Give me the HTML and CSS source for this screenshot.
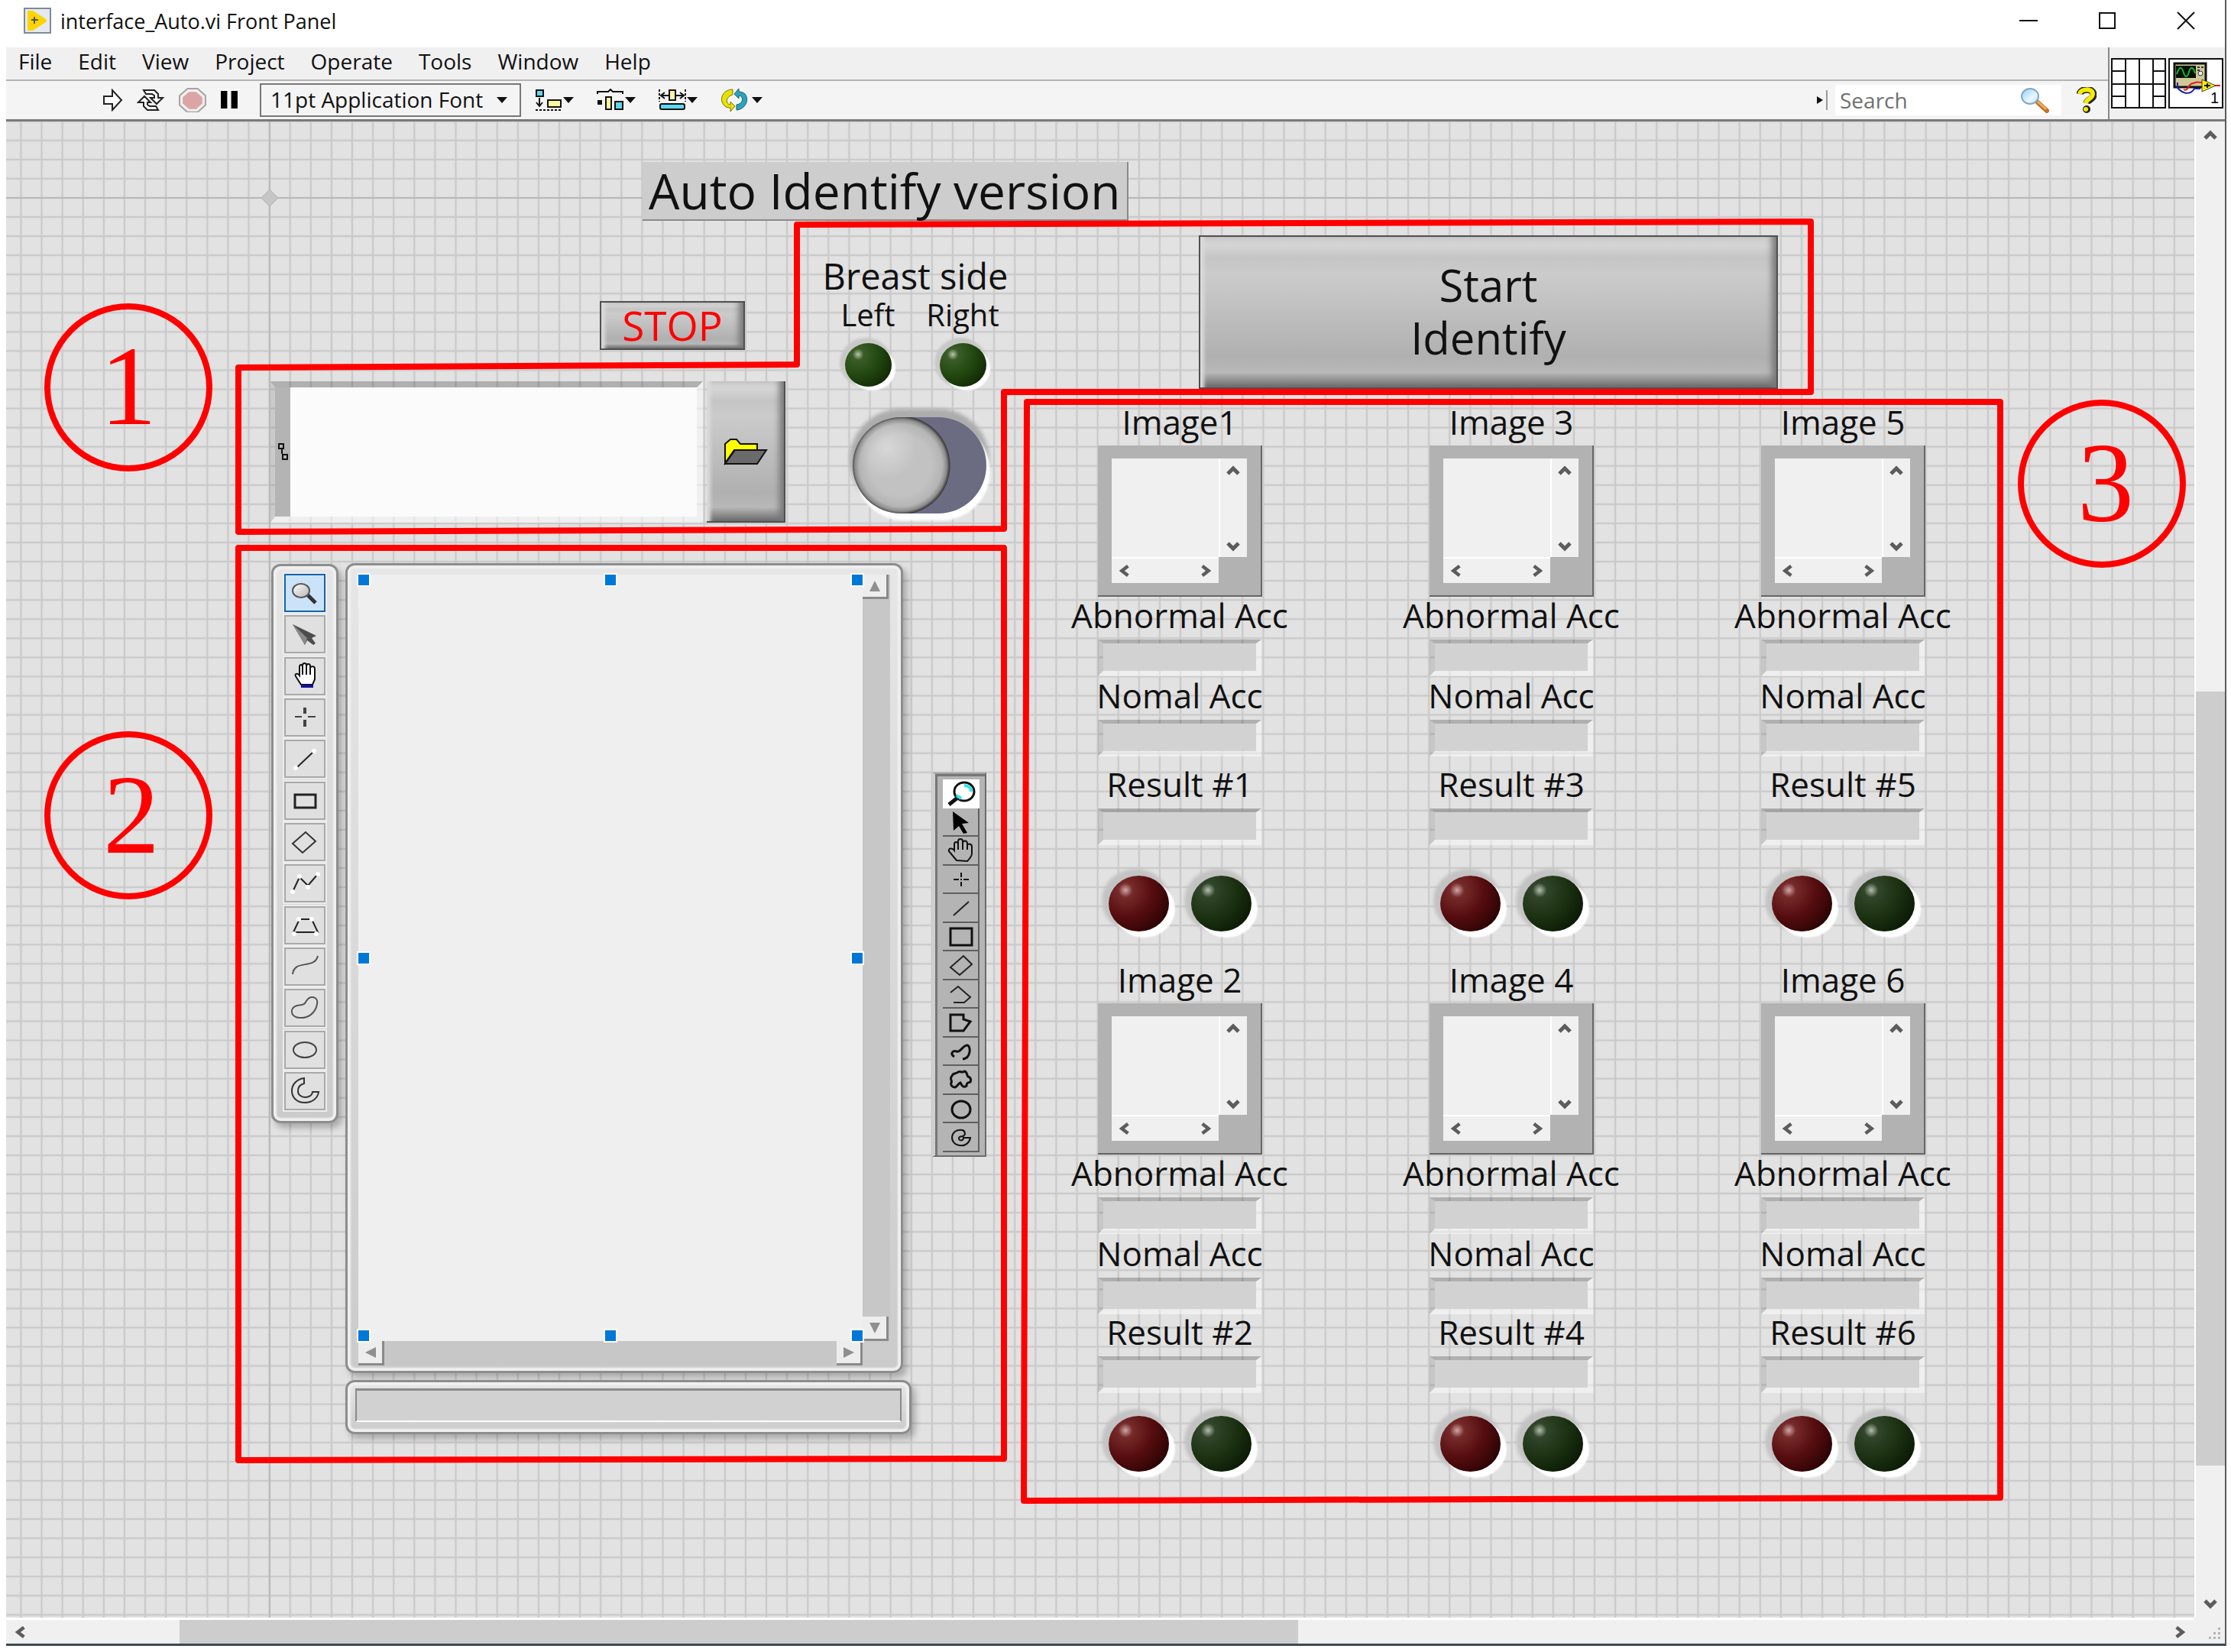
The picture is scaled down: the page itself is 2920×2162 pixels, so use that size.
FILE: index.html
```html
<!DOCTYPE html>
<html lang="en">
<head>
<meta charset="utf-8">
<meta name="viewport" content="width=device-width, initial-scale=1">
<title>interface_Auto.vi Front Panel</title>
<link rel="stylesheet" href="styles.css">
</head>
<body>
<svg class="defs" aria-hidden="true">
  <defs>
    <linearGradient id="lens" x1="0" y1="0" x2="1" y2="1"><stop offset="0" stop-color="#ffffff"/><stop offset="1" stop-color="#b4b4b4"/></linearGradient>
    <linearGradient id="blueLens" x1="0" y1="0" x2="1" y2="1"><stop offset="0" stop-color="#8fd0f5"/><stop offset="0.6" stop-color="#e8f7ff"/><stop offset="1" stop-color="#b9dcf7"/></linearGradient>
    <symbol id="caret" viewBox="0 0 16 10"><path d="M1 1h14L8 9z" fill="#111"/></symbol>
    <symbol id="chev-up" viewBox="0 0 18 14"><path d="M2 11L9 4l7 7" fill="none" stroke="#5c5c5c" stroke-width="5"/></symbol>
    <symbol id="chev-down" viewBox="0 0 18 14"><path d="M2 3l7 7 7-7" fill="none" stroke="#5c5c5c" stroke-width="5"/></symbol>
    <symbol id="chev-left" viewBox="0 0 16 18"><path d="M14 2L5 9l9 7" fill="none" stroke="#5c5c5c" stroke-width="5"/></symbol>
    <symbol id="chev-right" viewBox="0 0 16 18"><path d="M2 2l9 7-9 7" fill="none" stroke="#5c5c5c" stroke-width="5"/></symbol>
  </defs>
</svg>

<div class="window">
  <header class="titlebar">
    <svg class="app-icon" viewBox="0 0 36 34"><rect x="1" y="1" width="34" height="32" fill="#e4eaf0" stroke="#7d8b99" stroke-width="2"/><path d="M5 4h6q2 0 4 2l14 9q2 2 0 4l-14 9q-2 2-4 2H5z" fill="#ffd400"/><path d="M10 16h9M14 12v9" stroke="#555" stroke-width="2"/></svg>
    <h1 class="titlebar__text">interface_Auto.vi Front Panel</h1>
    <div class="titlebar__buttons">
      <button class="sysbtn" aria-label="Minimize"><svg viewBox="0 0 24 24"><path d="M0 12h24" stroke="#111" stroke-width="2"/></svg></button>
      <button class="sysbtn" aria-label="Maximize"><svg viewBox="0 0 24 24"><rect x="2" y="2" width="20" height="20" fill="none" stroke="#111" stroke-width="2"/></svg></button>
      <button class="sysbtn" aria-label="Close"><svg viewBox="0 0 24 24"><path d="M1 1l22 22M23 1L1 23" stroke="#111" stroke-width="2"/></svg></button>
    </div>
  </header>

  <div class="chrome">
    <div class="chrome__bars">
      <nav class="menubar">
        <a href="#">File</a><a href="#">Edit</a><a href="#">View</a><a href="#">Project</a><a href="#">Operate</a><a href="#">Tools</a><a href="#">Window</a><a href="#">Help</a>
      </nav>
      <div class="toolbar">
        <button class="tb tb--run" aria-label="Run"><svg viewBox="0 0 27 30"><path d="M2 10h11V2l12 13-12 13v-8H2z" fill="#fff" stroke="#222" stroke-width="2"/></svg></button>
        <button class="tb tb--cont" aria-label="Run Continuously"><svg viewBox="0 0 37 30"><path d="M9 2h14l5 5v5h6l-8 8-8-8h5V9l-3-2h-8z" fill="#fff" stroke="#222" stroke-width="2"/><path d="M28 28H14l-5-5v-5H2l8-8 8 8h-4v3l3 2h8z" fill="#fff" stroke="#222" stroke-width="2"/></svg></button>
        <button class="tb tb--abort" aria-label="Abort"><svg viewBox="0 0 35 32"><path d="M11 1h13l10 9v12l-10 9H11L1 22V10z" fill="#f3efef" stroke="#a9a4a4" stroke-width="2"/><path d="M13 5h9l8 7v8l-8 7h-9l-8-7v-8z" fill="#dba5a5"/></svg></button>
        <button class="tb tb--pause" aria-label="Pause"><svg viewBox="0 0 23 24"><path d="M1 1h8v22H1zM14 1h8v22h-8z" fill="#000"/></svg></button>
        <div class="fontpick">
          <select aria-label="Font"><option>11pt Application Font</option></select>
          <svg class="fontpick__caret"><use href="#caret"/></svg>
        </div>
        <button class="tb tb--menu" aria-label="Align Objects"><svg class="tb__pic" viewBox="0 0 36 30"><rect x="2" y="2" width="9" height="8" fill="#5fd8ee" stroke="#111" stroke-width="2"/><path d="M6 12v10M2 18l4 5 4-5" stroke="#111" stroke-width="2" fill="none"/><path d="M1 28h34" stroke="#111" stroke-width="2" stroke-dasharray="3 2"/><rect x="17" y="15" width="17" height="9" fill="#fdf7a0" stroke="#111" stroke-width="2"/></svg><svg class="tb__caret"><use href="#caret"/></svg></button>
        <button class="tb tb--menu" aria-label="Distribute Objects"><svg class="tb__pic" viewBox="0 0 36 30"><path d="M1 7V4h14l3-3 3 3h13v3" fill="none" stroke="#111" stroke-width="2"/><rect x="1" y="15" width="6" height="6" fill="#111"/><rect x="12" y="11" width="7" height="16" fill="#fdf7a0" stroke="#111" stroke-width="2"/><rect x="24" y="17" width="10" height="10" fill="#5fd8ee" stroke="#111" stroke-width="2"/></svg><svg class="tb__caret"><use href="#caret"/></svg></button>
        <button class="tb tb--menu" aria-label="Resize Objects"><svg class="tb__pic" viewBox="0 0 36 30"><path d="M1 1v16M35 1v16" stroke="#111" stroke-width="2" stroke-dasharray="3 2"/><path d="M3 9h11M8 5L3 9l5 4M33 9H22M28 5l5 4-5 4" fill="none" stroke="#111" stroke-width="2"/><rect x="14" y="2" width="8" height="13" fill="#fdf7a0" stroke="#111" stroke-width="2"/><rect x="2" y="20" width="32" height="7" rx="2" fill="#5fd8ee" stroke="#111" stroke-width="2"/></svg><svg class="tb__caret"><use href="#caret"/></svg></button>
        <button class="tb tb--menu tb--reorder" aria-label="Reorder"><svg class="tb__pic" viewBox="0 0 36 30"><path d="M16 1C3 1-2 14 4 21c2 3 5 4 9 4v5l6-7-6-6v4C6 20 7 10 16 8z" fill="#e8e000" stroke="#777500"/><path d="M21 28c12-1 17-14 11-21-2-2-5-3-8-3V0l-6 7 6 6V9c7 1 6 11-3 12z" fill="#2ba3bd" stroke="#0d5f70"/></svg><svg class="tb__caret"><use href="#caret"/></svg></button>
        <div class="toolbar__search">
          <svg class="search__grip" viewBox="0 0 16 26"><path d="M1 8v10l8-5z" fill="#111"/><path d="M14 0v26" stroke="#999" stroke-width="2"/></svg>
          <div class="search">
            <input type="search" placeholder="Search" aria-label="Search">
            <svg class="search__icon" viewBox="0 0 38 34"><path d="M23 20l12 11" stroke="#c27024" stroke-width="6" stroke-linecap="round"/><path d="M23 19l11 10" stroke="#f2ac5b" stroke-width="3"/><ellipse cx="13" cy="12" rx="11" ry="10" fill="url(#blueLens)" stroke="#86a6c4" stroke-width="2"/></svg>
          </div>
          <button class="tb tb--help" aria-label="Context Help"><svg viewBox="0 0 26 34"><path d="M4 9C5 2 21 1 22 9c1 7-8 7-9 12" fill="none" stroke="#222" stroke-width="9"/><circle cx="13" cy="29" r="5" fill="#222"/><path d="M4 9C5 2 21 1 21 9c0 6-8 6-9 12" fill="none" stroke="#f5ec00" stroke-width="6"/><circle cx="12" cy="29" r="3" fill="#f5ec00"/></svg></button>
        </div>
      </div>
    </div>
    <div class="chrome__icons">
      <svg class="vi-icon" viewBox="0 0 72 66" aria-label="Connector pane"><rect x="1" y="1" width="70" height="64" fill="#fff" stroke="#111" stroke-width="2"/><path d="M19 1v64M37 1v64M55 1v64M1 34h70M1 17h18M1 50h18M55 17h16M55 50h16" stroke="#111" stroke-width="2"/></svg>
      <svg class="vi-icon" viewBox="0 0 72 66" aria-label="VI icon"><rect x="1" y="1" width="70" height="64" fill="#fff" stroke="#111" stroke-width="2"/><rect x="8" y="7" width="41" height="31" fill="#cfc99a" stroke="#111" stroke-width="3"/><rect x="10" y="10" width="26" height="16" fill="#061006"/><path d="M11 21c4-12 7-9 9-2s5 7 7-1 6-6 8 2" fill="none" stroke="#19b52c" stroke-width="2"/><path d="M38 12h3M43 12h3M38 16h3" stroke="#333" stroke-width="2"/><circle cx="42" cy="20" r="3" fill="#eee" stroke="#333"/><path d="M12 32v7c9 10 18 8 22 1h8" fill="none" stroke="#1a22a8" stroke-width="2"/><path d="M20 41c6 4 6-9 13-8 4-3 6-1 11-1" fill="none" stroke="#e11" stroke-width="2"/><path d="M60 36h8" stroke="#e11" stroke-width="2"/><path d="M44 28v16l18-8z" fill="#f5ec00" stroke="#444" stroke-width="1"/><path d="M47 36h8M51 33v6" stroke="#111" stroke-width="2"/><text x="55" y="59" class="vi-icon__num">1</text></svg>
    </div>
  </div>

  <div class="workarea">
    <main class="canvas">
      <svg class="layer" aria-hidden="true">
        <defs><pattern id="grid" x="5.9" y="12.2" width="27.1" height="25.06" patternUnits="userSpaceOnUse"><path d="M13.5 0v25.06M0 12.5h27.1" stroke="#cacaca" stroke-width="2.4"/></pattern></defs>
        <rect width="100%" height="100%" fill="url(#grid)"/>
        <path d="M345 0V1958M0 100H2864" stroke="#b9b9b9" stroke-width="2"/>
        <path d="M345 89l11 11-11 11-11-11z" fill="#c6c6c6" stroke="#b0b0b0"/>
      </svg>

      <h2 class="panel-title">Auto Identify version</h2>
      <button class="bevel bevel--stop">STOP</button>

      <div class="side">
        <h3 class="side__title">Breast side</h3>
        <div class="side__leds">
          <div class="side__led"><span class="label--side">Left</span><span class="led led--small"></span></div>
          <div class="side__led"><span class="label--side">Right</span><span class="led led--small"></span></div>
        </div>
        <input class="knob" type="checkbox" role="switch" aria-label="Breast side">
      </div>

      <button class="bevel bevel--start">Start<br>Identify</button>

      <div class="path">
        <div class="path__well">
          <svg class="path__glyph" viewBox="0 0 20 169"><path d="M5 74h6v6H5zM9 80v7M10 88h6v6h-6z" fill="none" stroke="#111" stroke-width="2"/></svg>
          <input type="text" aria-label="Image path">
        </div>
        <button class="bevel path__browse" aria-label="Browse"><svg viewBox="0 0 58 36"><path d="M2 33V8l7-6h8l5 6h22v8H14z" fill="#ffff00" stroke="#111" stroke-width="2"/><path d="M15 16h41L44 34H2z" fill="#6a6a6a" stroke="#111" stroke-width="2"/></svg></button>
      </div>

      <div class="frame tools">
        <button class="tool tool--on" aria-label="Zoom"><svg viewBox="0 0 54 50"><path d="M31 28l10 10" stroke="#333" stroke-width="5"/><ellipse cx="22" cy="22" rx="11" ry="9" fill="url(#lens)" stroke="#555" stroke-width="2"/></svg></button>
        <button class="tool" aria-label="Select"><svg viewBox="0 0 54 50"><path d="M11 12l31 15-6 3 5 7-3 2-8-6-3 6z" fill="#4d4d4d"/><path d="M11 12l16 27 3-9z" fill="#8a8a8a"/></svg></button>
        <button class="tool" aria-label="Pan"><svg viewBox="0 0 54 50"><path d="M22 36l-7-11c-2-4 3-4 5-1V13c0-4 4-4 4 0v-2c0-4 5-4 5 0v1c0-4 5-4 5 0v2c1-3 6-2 6 1v14l-3 7z" fill="#fff" stroke="#111" stroke-width="2"/><path d="M24 13v10M29 12v11M34 14v9" stroke="#111" stroke-width="2"/><path d="M22 38h16" stroke="#12129a" stroke-width="4"/></svg></button>
        <button class="tool" aria-label="Point"><svg viewBox="0 0 54 50"><path d="M14 24h9M31 24h10" stroke="#444" stroke-width="2"/><path d="M27 12v8M27 28v9" stroke="#444" stroke-width="4"/></svg></button>
        <button class="tool" aria-label="Line"><svg viewBox="0 0 54 50"><path d="M17 36l21-20" stroke="#222" stroke-width="2"/><g fill="#fff"><circle cx="15" cy="37" r="3"/><circle cx="39" cy="15" r="3"/></g></svg></button>
        <button class="tool" aria-label="Rectangle"><svg viewBox="0 0 54 50"><rect x="14" y="17" width="27" height="17" fill="none" stroke="#222" stroke-width="3"/></svg></button>
        <button class="tool" aria-label="Rotated rectangle"><svg viewBox="0 0 54 50"><path d="M11 27l17-15 13 12-17 15z" fill="none" stroke="#333" stroke-width="2"/></svg></button>
        <button class="tool" aria-label="Broken line"><svg viewBox="0 0 54 50"><path d="M12 34l8-17 11 11 12-14" fill="none" stroke="#222" stroke-width="2"/><g fill="#fff"><circle cx="11" cy="36" r="3"/><circle cx="20" cy="16" r="3"/><circle cx="31" cy="30" r="3"/><circle cx="44" cy="13" r="3"/></g></svg></button>
        <button class="tool" aria-label="Polygon"><svg viewBox="0 0 54 50"><path d="M12 34l8-17h16l8 17z" fill="none" stroke="#222" stroke-width="2"/><g fill="#fff"><circle cx="13" cy="36" r="3"/><circle cx="19" cy="17" r="3"/><circle cx="36" cy="17" r="3"/><circle cx="42" cy="36" r="3"/></g></svg></button>
        <button class="tool" aria-label="Freehand line"><svg viewBox="0 0 54 50"><path d="M11 35c2-20 29-6 33-24" fill="none" stroke="#555" stroke-width="2"/></svg></button>
        <button class="tool" aria-label="Freehand region"><svg viewBox="0 0 54 50"><path d="M29 16c5-8 16-6 14 4-2 12-12 19-23 18-13-1-13-14-3-16 6-1 9 0 12-6z" fill="none" stroke="#555" stroke-width="2"/></svg></button>
        <button class="tool" aria-label="Oval"><svg viewBox="0 0 54 50"><ellipse cx="27" cy="25" rx="15" ry="10" fill="none" stroke="#444" stroke-width="2"/></svg></button>
        <button class="tool" aria-label="Annulus"><svg viewBox="0 0 54 50"><path d="M26 8C4 11 5 40 27 40c10 0 17-6 18-14h-8c-1 10-19 9-19-1 0-6 4-9 8-10z" fill="none" stroke="#333" stroke-width="2"/></svg></button>
      </div>

      <div class="frame viewer">
        <div class="viewer__image">
          <i class="grip grip--nw"></i><i class="grip grip--n"></i><i class="grip grip--ne"></i><i class="grip grip--w"></i><i class="grip grip--e"></i><i class="grip grip--sw"></i><i class="grip grip--s"></i><i class="grip grip--se"></i>
        </div>
        <div class="viewer__bar viewer__bar--v">
          <button class="arrow" aria-label="Scroll up"><svg viewBox="0 0 16 16"><path d="M8 1l7 14H1z" fill="#8f8f8f"/></svg></button>
          <button class="arrow" aria-label="Scroll down"><svg viewBox="0 0 16 16"><path d="M8 15l7-14H1z" fill="#8f8f8f"/></svg></button>
        </div>
        <div class="viewer__bar viewer__bar--h">
          <button class="arrow" aria-label="Scroll left"><svg viewBox="0 0 16 16"><path d="M1 8l14-7v14z" fill="#8f8f8f"/></svg></button>
          <button class="arrow" aria-label="Scroll right"><svg viewBox="0 0 16 16"><path d="M15 8L1 1v14z" fill="#8f8f8f"/></svg></button>
        </div>
      </div>

      <div class="frame status"><output class="status__well" aria-label="Image information"></output></div>

      <div class="palette">
        <button class="ptool ptool--on" aria-label="Zoom"><svg viewBox="0 0 48 36"><path d="M18 24L8 32" stroke="#111" stroke-width="5"/><ellipse cx="28" cy="15" rx="13" ry="12" fill="#fff" stroke="#111" stroke-width="3"/><path d="M28 7c5 0 9 3 9 8M18 20l6 4" stroke="#2fe3ee" stroke-width="4" fill="none"/></svg></button>
        <button class="ptool" aria-label="Select"><svg viewBox="0 0 48 36"><path d="M13 4l21 15-9 1 7 12-5 1-6-10-7 6z" fill="#000"/></svg></button>
        <button class="ptool" aria-label="Pan"><svg viewBox="0 0 48 36"><path d="M18 30L8 18c-1-4 4-5 7-1V9c0-4 5-4 5 0V5c0-4 6-4 6 0v2c1-4 6-3 6 1v2c2-3 6-1 6 2v9c0 4-3 7-6 10zM20 9v7M26 7v9M32 9v7" fill="none" stroke="#111" stroke-width="2"/></svg></button>
        <button class="ptool" aria-label="Point"><svg viewBox="0 0 48 36"><path d="M14 18h7M27 18h7M24 9v6M24 21v6M23 18h2" stroke="#111" stroke-width="2"/></svg></button>
        <button class="ptool" aria-label="Line"><svg viewBox="0 0 48 36"><path d="M14 27l20-18" stroke="#222" stroke-width="2"/></svg></button>
        <button class="ptool" aria-label="Rectangle"><svg viewBox="0 0 48 36"><rect x="10" y="7" width="28" height="22" fill="none" stroke="#111" stroke-width="3"/></svg></button>
        <button class="ptool" aria-label="Rotated rectangle"><svg viewBox="0 0 48 36"><path d="M10 20L27 5l11 11-16 14z" fill="none" stroke="#222" stroke-width="2"/></svg></button>
        <button class="ptool" aria-label="Broken line"><svg viewBox="0 0 48 36"><path d="M10 16l10-8 16 14-8 7H14" fill="none" stroke="#222" stroke-width="2"/></svg></button>
        <button class="ptool" aria-label="Polygon"><svg viewBox="0 0 48 36"><path d="M10 7h17v6l9 3-9 12H10z" fill="none" stroke="#111" stroke-width="3"/></svg></button>
        <button class="ptool" aria-label="Freehand line"><svg viewBox="0 0 48 36"><path d="M15 24c-6-4-2-9 3-7s9-9 14-8 5 17-6 18" fill="none" stroke="#111" stroke-width="3"/></svg></button>
        <button class="ptool" aria-label="Freehand region"><svg viewBox="0 0 48 36"><path d="M12 12c2-5 5-2 8-5 3-2 5 2 8-1 4 0 3 5 5 7 4 1 4 5 3 7-3 1-5 1-5 5-4 3-6 0-8-4-3 1-4 5-7 6-4 0-6-3-5-6 2-3-3-5 1-9z" fill="none" stroke="#111" stroke-width="3"/></svg></button>
        <button class="ptool" aria-label="Oval"><svg viewBox="0 0 48 36"><ellipse cx="24" cy="18" rx="12" ry="11" fill="none" stroke="#111" stroke-width="3"/></svg></button>
        <button class="ptool" aria-label="Annulus"><svg viewBox="0 0 48 36"><path d="M26 8C9 5 7 27 23 28c7 1 12-4 13-10h-9c0 5-7 4-6 0 1-3 7 0 8-5 0-3-1-4-3-5z" fill="none" stroke="#111" stroke-width="2"/></svg></button>
      </div>

      <section class="results">
        <article class="probe">
          <h3 class="label">Image1</h3>
          <div class="thumb"><div class="thumb__v"><svg><use href="#chev-up"/></svg><svg><use href="#chev-down"/></svg></div><div class="thumb__h"><svg><use href="#chev-left"/></svg><svg><use href="#chev-right"/></svg></div><div class="thumb__img"></div></div>
          <label class="label" for="a1">Abnormal Acc</label><input class="field" id="a1" readonly>
          <label class="label" for="n1">Nomal Acc</label><input class="field" id="n1" readonly>
          <label class="label label--result" for="r1">Result #1</label><input class="field" id="r1" readonly>
          <div class="leds"><span class="led led--red"></span><span class="led"></span></div>
        </article>
        <article class="probe">
          <h3 class="label">Image 3</h3>
          <div class="thumb"><div class="thumb__v"><svg><use href="#chev-up"/></svg><svg><use href="#chev-down"/></svg></div><div class="thumb__h"><svg><use href="#chev-left"/></svg><svg><use href="#chev-right"/></svg></div><div class="thumb__img"></div></div>
          <label class="label" for="a3">Abnormal Acc</label><input class="field" id="a3" readonly>
          <label class="label" for="n3">Nomal Acc</label><input class="field" id="n3" readonly>
          <label class="label label--result" for="r3">Result #3</label><input class="field" id="r3" readonly>
          <div class="leds"><span class="led led--red"></span><span class="led"></span></div>
        </article>
        <article class="probe">
          <h3 class="label">Image 5</h3>
          <div class="thumb"><div class="thumb__v"><svg><use href="#chev-up"/></svg><svg><use href="#chev-down"/></svg></div><div class="thumb__h"><svg><use href="#chev-left"/></svg><svg><use href="#chev-right"/></svg></div><div class="thumb__img"></div></div>
          <label class="label" for="a5">Abnormal Acc</label><input class="field" id="a5" readonly>
          <label class="label" for="n5">Nomal Acc</label><input class="field" id="n5" readonly>
          <label class="label label--result" for="r5">Result #5</label><input class="field" id="r5" readonly>
          <div class="leds"><span class="led led--red"></span><span class="led"></span></div>
        </article>
        <article class="probe probe--lower">
          <h3 class="label">Image 2</h3>
          <div class="thumb"><div class="thumb__v"><svg><use href="#chev-up"/></svg><svg><use href="#chev-down"/></svg></div><div class="thumb__h"><svg><use href="#chev-left"/></svg><svg><use href="#chev-right"/></svg></div><div class="thumb__img"></div></div>
          <label class="label" for="a2">Abnormal Acc</label><input class="field" id="a2" readonly>
          <label class="label" for="n2">Nomal Acc</label><input class="field" id="n2" readonly>
          <label class="label label--result" for="r2">Result #2</label><input class="field" id="r2" readonly>
          <div class="leds"><span class="led led--red"></span><span class="led"></span></div>
        </article>
        <article class="probe probe--lower">
          <h3 class="label">Image 4</h3>
          <div class="thumb"><div class="thumb__v"><svg><use href="#chev-up"/></svg><svg><use href="#chev-down"/></svg></div><div class="thumb__h"><svg><use href="#chev-left"/></svg><svg><use href="#chev-right"/></svg></div><div class="thumb__img"></div></div>
          <label class="label" for="a4">Abnormal Acc</label><input class="field" id="a4" readonly>
          <label class="label" for="n4">Nomal Acc</label><input class="field" id="n4" readonly>
          <label class="label label--result" for="r4">Result #4</label><input class="field" id="r4" readonly>
          <div class="leds"><span class="led led--red"></span><span class="led"></span></div>
        </article>
        <article class="probe probe--lower">
          <h3 class="label">Image 6</h3>
          <div class="thumb"><div class="thumb__v"><svg><use href="#chev-up"/></svg><svg><use href="#chev-down"/></svg></div><div class="thumb__h"><svg><use href="#chev-left"/></svg><svg><use href="#chev-right"/></svg></div><div class="thumb__img"></div></div>
          <label class="label" for="a6">Abnormal Acc</label><input class="field" id="a6" readonly>
          <label class="label" for="n6">Nomal Acc</label><input class="field" id="n6" readonly>
          <label class="label label--result" for="r6">Result #6</label><input class="field" id="r6" readonly>
          <div class="leds"><span class="led led--red"></span><span class="led"></span></div>
        </article>
      </section>

      <!-- Numbered callouts over the three working areas -->
      <svg class="layer layer--marks">
        <g fill="none" stroke="#ff0000" stroke-width="8" stroke-linejoin="round">
          <path d="M304 322L1035 318V135L2362 131V354H1306V533L304 537z"/>
          <path d="M304 558H1306V1750L304 1752z"/>
          <path d="M1336 367H2610V1801L1332 1805z"/>
          <circle cx="160" cy="348" r="106"/>
          <circle cx="160" cy="908" r="106"/>
          <circle cx="2743" cy="474" r="106"/>
        </g>
        <g class="marks__num">
          <text x="160" y="396">1</text>
          <text x="164" y="957">2</text>
          <text x="2748" y="523">3</text>
        </g>
      </svg>
    </main>

    <div class="scroll scroll--v">
      <button class="scroll__btn" aria-label="Scroll up"><svg><use href="#chev-up"/></svg></button>
      <span class="scroll__thumb"></span>
      <button class="scroll__btn" aria-label="Scroll down"><svg><use href="#chev-down"/></svg></button>
    </div>
    <div class="scroll scroll--h">
      <button class="scroll__btn" aria-label="Scroll left"><svg><use href="#chev-left"/></svg></button>
      <span class="scroll__thumb"></span>
      <button class="scroll__btn" aria-label="Scroll right"><svg><use href="#chev-right"/></svg></button>
    </div>
    <div class="corner"><svg viewBox="0 0 20 20"><path d="M15 3h3v3h-3zM15 9h3v3h-3zM15 15h3v3h-3zM9 9h3v3H9zM9 15h3v3H9zM3 15h3v3H3z" fill="#b4b4b4"/></svg></div>
  </div>
</div>
</body>
</html>
```

FILE: styles.css
```css
* { box-sizing: border-box; }

body {
  margin: 0;
  padding: 0 6px 8px 8px;
  min-height: 100vh;
  display: flex;
  background: #fff;
  font-family: "Open Sans", "Noto Sans", sans-serif;
  font-size: 28px;
  color: #111;
}

h1, h2, h3 { margin: 0; font-weight: 400; }
button { padding: 0; border: 0; background: none; font: inherit; color: inherit; }
svg { display: block; }
.defs { position: absolute; width: 0; height: 0; }

.window {
  flex: 1;
  display: flex;
  flex-direction: column;
  border-right: 2px solid #5a5a5a;
  border-bottom: 3px solid #3c4a50;
}

/* Title bar */
.titlebar { display: flex; align-items: center; height: 62px; padding: 0 0 8px 23px; }
.app-icon { width: 36px; height: 34px; margin-right: 12px; }
.titlebar__text { flex: 1; font-size: 27px; }
.titlebar__buttons { display: flex; }
.sysbtn { width: 103px; height: 54px; display: grid; place-items: center; }
.sysbtn svg { width: 24px; height: 24px; }

/* Menu and tool bars */
.chrome { display: flex; background: #f0f0f0; border-bottom: 3px solid #7a7a7a; }
.chrome__bars { flex: 1; }
.menubar {
  display: flex;
  align-items: center;
  gap: 34px;
  height: 44px;
  padding: 0 16px 6px;
  border-bottom: 2px solid #b4b4b4;
}
.menubar a { color: inherit; text-decoration: none; }
.toolbar { display: flex; align-items: center; gap: 18px; height: 50px; padding-left: 126px; background: #f4f4f4; }
.tb { flex: none; display: flex; align-items: center; }
.tb--run { width: 27px; }
.tb--cont { width: 37px; }
.tb--abort { width: 36px; }
.tb--pause { width: 24px; }
.tb--help { width: 26px; }
.tb svg { width: 100%; }
.tb--menu { width: 53px; margin-right: 10px; }
.tb--menu .tb__pic { width: 36px; height: 30px; }
.tb--menu .tb__caret { width: 16px; height: 10px; }
.tb--reorder { width: 57px; gap: 4px; }
.fontpick { position: relative; width: 342px; height: 44px; margin-left: 10px; }
.fontpick select {
  width: 100%;
  height: 100%;
  padding: 0 0 3px 12px;
  appearance: none;
  border: 2px solid #777;
  border-radius: 0;
  background: #f4f4f4;
  font: inherit;
  color: inherit;
}
.fontpick__caret { position: absolute; right: 17px; top: 17px; width: 16px; height: 10px; }
.toolbar__search { margin-left: auto; margin-right: 15px; display: flex; align-items: center; }
.search__grip { width: 16px; height: 26px; margin-right: 9px; }
.search { display: flex; align-items: center; width: 296px; height: 40px; margin-right: 20px; padding: 0 16px 0 6px; background: #fff; }
.search input { flex: 1; min-width: 0; padding: 0; border: 0; outline: 0; background: none; font: inherit; }
.search input::placeholder { color: #707070; opacity: 1; }
.search__icon { width: 38px; height: 34px; }
.chrome__icons { display: flex; align-items: center; gap: 3px; padding: 0 2px; border-left: 2px solid #888; }
.vi-icon { width: 72px; height: 66px; }
.vi-icon__num { font-family: "Liberation Sans", sans-serif; font-size: 20px; }

/* Work area: panel plus scroll bars */
.workarea { flex: 1; display: grid; grid-template-columns: 1fr 40px; grid-template-rows: 1fr 34px; min-height: 1900px; }
.scroll { display: grid; background: #f0f0f0; border: 0 solid #fff; }
.scroll--v { grid-template-rows: 36px 710fr 1013fr 163fr 36px; border-left-width: 2px; }
.scroll--v .scroll__thumb { grid-row: 3; }
.scroll--v .scroll__btn:last-child { grid-row: 5; }
.scroll--h { grid-template-columns: 36px 191fr 1464fr 1137fr 36px; border-top-width: 3px; }
.scroll--h .scroll__thumb { grid-column: 3; }
.scroll--h .scroll__btn:last-child { grid-column: 5; }
.scroll__thumb { background: #cdcdcd; }
.scroll__btn { display: grid; place-items: center; }
.scroll__btn svg { width: 18px; height: 16px; }
.corner { display: grid; place-items: end; padding: 4px; background: #f0f0f0; }
.corner svg { width: 20px; height: 20px; }

/* Front panel: a free canvas on which each control has its own place */
.canvas { position: relative; overflow: hidden; background: #e2e2e2; }
.layer { position: absolute; inset: 0; width: 100%; height: 100%; }
.layer--marks { pointer-events: none; }
.marks__num { font-family: "Liberation Serif", serif; font-size: 148px; fill: #ff0000; text-anchor: middle; }

.panel-title {
  position: absolute;
  left: 833px;
  top: 53px;
  padding: 0 8px;
  line-height: 75px;
  font-size: 64px;
  background: #cdcdcd;
  border-right: 2px solid #8a8a8a;
  border-bottom: 2px solid #8a8a8a;
  white-space: nowrap;
}

.bevel {
  border: 2px solid #505050;
  background: linear-gradient(#cfcfcf, #d4d4d4 6%, #c5c5c5 14%, #cbcbcb 25%, #b0b0b0 80%, #b8b8b8 90%, #6a6a6a);
  box-shadow: inset 10px 0 4px -5px #dadada, inset -10px 0 8px -4px #777;
}
.bevel--stop { position: absolute; left: 777px; top: 235px; width: 190px; height: 64px; font-size: 53px; line-height: 58px; color: #ff0000; }
.bevel--start { position: absolute; left: 1561px; top: 149px; width: 758px; height: 201px; padding-bottom: 3px; font-size: 58px; line-height: 69px; }

.led {
  width: 79px;
  height: 73px;
  border-radius: 50%;
  background: radial-gradient(circle at 28% 26%, #b4bfae 0, #31452a 12%, #1c3212 45%, #0b1a05 80%);
  box-shadow: 7px 7px 2px 1px #fff, -4px -4px 4px 5px #c3c3c3;
}
.led--red { background: radial-gradient(circle at 28% 26%, #d0a8a8 0, #762a2a 12%, #560d0f 45%, #250203 85%); }
.led--small { width: 61px; height: 57px; background: radial-gradient(circle at 28% 26%, #b7c7ac 0, #3c5c27 12%, #224810 45%, #102404 85%); box-shadow: 5px 5px 2px 0 #fff, -3px -3px 3px 4px #c8c8c8; }

.side { position: absolute; left: 1066px; top: 172px; width: 248px; display: flex; flex-direction: column; }
.side__title { font-size: 47px; line-height: 60px; text-align: center; white-space: nowrap; }
.side__leds { display: flex; justify-content: center; gap: 24px; }
.side__led { width: 100px; display: flex; flex-direction: column; align-items: center; }
.label--side { font-size: 40px; line-height: 42px; margin-bottom: 16px; }
.knob {
  appearance: none;
  width: 175px;
  height: 126px;
  margin: 40px 0 0 42px;
  border-radius: 63px;
  background: radial-gradient(circle at 45px 40px, rgba(255, 255, 255, .35), transparent 40px), radial-gradient(circle at 63px 63px, #c2c2c2 0 40px, #b5b5b5 54px, #8c8c8c 60px, #3a3a3a 64px, transparent 65px), #6b6b82;
  box-shadow: 4px 8px 3px 1px #fff, 0 -7px 5px 4px #adadad;
}

.path { position: absolute; left: 346px; top: 340px; height: 185px; display: flex; gap: 5px; }
.path__well {
  display: flex;
  width: 566px;
  border: 8px solid;
  border-width: 8px 8px 8px 6px;
  border-color: rgba(0, 0, 0, .22) rgba(255, 255, 255, .5) rgba(255, 255, 255, .5) rgba(0, 0, 0, .1);
}
.path__glyph { width: 20px; height: 169px; background: #b4b4b4; }
.path__well input { flex: 1; min-width: 0; border: 0; background: #fbfbfb; font: inherit; }
.path__browse { width: 103px; display: grid; place-items: center; border-width: 0 2px 2px 0; }
.path__browse svg { width: 58px; height: 36px; }

/* Rounded silver frames */
.frame {
  position: absolute;
  border: 3px solid #8d8d8d;
  border-radius: 12px;
  background: linear-gradient(#e6e6e6, #cbcbcb);
  box-shadow: inset 0 0 2px 4px #f0f0f0, 5px 6px 8px rgba(0, 0, 0, .25);
}
.tools { left: 347px; top: 579px; width: 88px; height: 732px; padding: 10px 0 14px; display: flex; flex-direction: column; align-items: center; justify-content: space-between; }
.tool { width: 54px; height: 50px; border: 2px solid #a9a9a9; background: #e0e0e0; outline: 2px solid #ececec; }
.tool svg { width: 54px; height: 50px; margin: -2px; }
.tool--on { border-color: #1565ac; background: #cbe3f8; }

.viewer { left: 444px; top: 578px; width: 730px; height: 1060px; padding: 12px 14px 7px 14px; display: grid; grid-template-columns: 1fr 36px; grid-template-rows: 1fr 32px; }
.viewer__image { position: relative; background: #efefef; }
.viewer__bar { display: flex; justify-content: space-between; background: #c7c7c7; }
.viewer__bar--v { flex-direction: column; }
.arrow { width: 34px; height: 32px; display: grid; place-items: center; background: #ededed; border: 0 solid #8a8a8a; border-width: 0 3px 3px 0; }
.arrow svg { width: 18px; height: 16px; }
.grip { position: absolute; width: 14px; height: 14px; background: #0078d7; outline: 2px solid #fff; }
.grip--nw, .grip--n, .grip--ne { top: 0; }
.grip--sw, .grip--s, .grip--se { bottom: 0; }
.grip--w, .grip--e { top: calc(50% - 7px); }
.grip--nw, .grip--w, .grip--sw { left: 0; }
.grip--n, .grip--s { left: calc(50% - 7px); }
.grip--ne, .grip--e, .grip--se { right: 0; }

.status { left: 444px; top: 1647px; width: 741px; height: 71px; padding: 8px 10px 13px; display: flex; }
.status__well { flex: 1; background: #d1d1d1; border: 2px solid #8a8a8a; border-top-width: 3px; border-bottom-color: #fff; }

.palette {
  position: absolute;
  left: 1212px;
  top: 852px;
  width: 71px;
  height: 503px;
  padding: 7px 7px 4px 10px;
  display: flex;
  flex-direction: column;
  background: #b4b4b4;
  border: 2px solid #6c6c6c;
  border-left: 4px solid #cfcfcf;
  border-top-color: #a0a0a0;
  box-shadow: inset 3px 3px 0 #777;
}
.ptool { flex: 1; display: grid; place-items: center; border: 0 solid #5f5f5f; border-width: 0 2px 2px 0; background: #b4b4b4; }
.ptool svg { width: 48px; height: 36px; margin: 0 -2px -2px 0; }
.ptool--on { background: #fff; border-color: #fff; }

/* Classification results */
.results { position: absolute; left: 1396px; top: 368px; display: grid; grid-template-columns: repeat(3, 280px); gap: 38px 154px; }
.probe { display: flex; flex-direction: column; align-items: center; }
.label { font-size: 44px; line-height: 50px; white-space: nowrap; }
.thumb {
  width: 215px;
  height: 198px;
  margin-top: 6px;
  padding: 17px 18px 16px 18px;
  display: grid;
  grid-template-columns: 1fr 37px;
  grid-template-rows: 1fr 34px;
  background: #b2b2b2;
  border: 0 solid #666;
  border-width: 0 2px 2px 0;
}
.thumb__img { grid-area: 1 / 1; background: #f0f0f0; }
.thumb__v { grid-area: 1 / 2; display: flex; flex-direction: column; align-items: center; justify-content: space-between; padding: 8px 0 6px; background: #f0f0f0; border-left: 2px solid #fff; }
.thumb__h { grid-area: 2 / 1; display: flex; align-items: center; justify-content: space-between; padding: 0 7px; background: #f0f0f0; border-top: 2px solid #fff; }
.thumb svg { width: 18px; height: 16px; }
.field {
  width: 214px;
  height: 48px;
  margin-top: 7px;
  padding: 0;
  border: 7px solid;
  border-top-width: 5px;
  border-color: rgba(0, 0, 0, .22) rgba(255, 255, 255, .45) rgba(255, 255, 255, .45) rgba(0, 0, 0, .12);
  background: #d2d2d2;
  background-clip: padding-box;
  font: inherit;
}
.thumb + .label { margin-top: -1px; }
.label--result { margin-top: 11px; }
.leds { display: flex; gap: 29px; margin-top: 40px; }
.probe--lower .label--result { margin-top: -2px; }
.probe--lower .leds { margin-top: 30px; }
```
